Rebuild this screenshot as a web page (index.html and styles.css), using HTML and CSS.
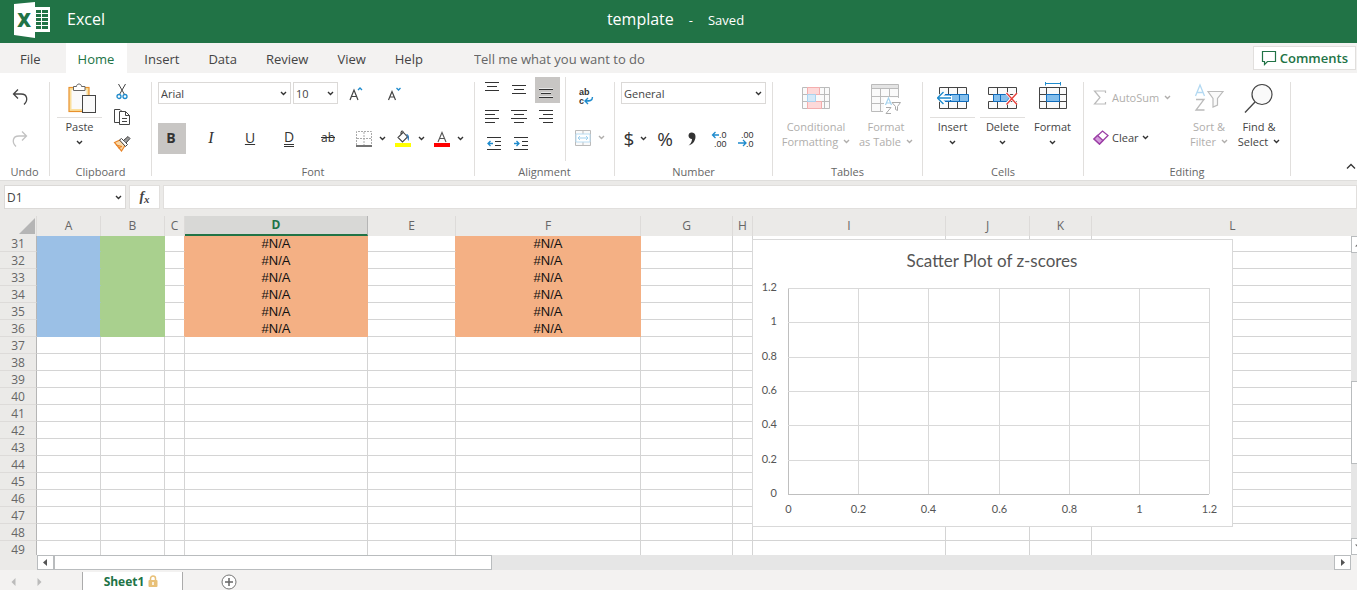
FILE: index.html
```html
<!DOCTYPE html>
<html lang="en">
<head>
    <meta charset="utf-8">
    <title>template - Excel</title>
    <link rel="stylesheet" href="styles.css">
</head>
<body>
    <!-- shared symbols -->
    <svg class="symbols" aria-hidden="true">
        <symbol id="chevron" viewBox="0 0 7 7"><path d="M1 2l2.5 2.5L6 2" fill="none" stroke="currentColor" stroke-width="1.4"/></symbol>
    </svg>

    <header class="topbar">
        <div class="brand">
            <svg width="38" height="38" viewBox="0 0 38 38">
                <path d="M22 6h15v25H22z" fill="#fff"/>
                <path d="M23 9h5v3h-5zM29 9h6v3h-6zM23 13h5v3h-5zM29 13h6v3h-6zM23 17h5v3h-5zM29 17h6v3h-6zM23 21h5v3h-5zM29 21h6v3h-6zM23 25h5v3h-5zM29 25h6v3h-6z" fill="#217346"/>
                <path d="M1 3l21-2v36L1 34z" fill="#fff"/>
                <text x="11" y="26" class="logo-x">X</text>
            </svg>
            <span>Excel</span>
        </div>
        <div class="doc-title"><span>template</span><span class="saved">-</span><span class="saved">Saved</span></div>
    </header>

    <nav class="tabs">
        <button class="tab tab-file">File</button>
        <button class="tab active">Home</button>
        <button class="tab">Insert</button>
        <button class="tab">Data</button>
        <button class="tab">Review</button>
        <button class="tab">View</button>
        <button class="tab">Help</button>
        <input class="tell-me" type="text" placeholder="Tell me what you want to do" aria-label="Tell me what you want to do">
        <button class="comments">
            <svg width="16" height="16" viewBox="0 0 16 16"><path d="M1.500 1.500h13v10H6.500L3.500 14.500v-3h-2z" fill="none" stroke="#217346" stroke-width="1.200"/></svg>
            Comments
        </button>
    </nav>

    <div class="ribbon">
        <section class="group g-undo">
            <div class="tools stack">
                <button class="icon-btn" aria-label="Undo"><svg width="16" height="18" viewBox="0 0 16 18"><path d="M6 1.500L1.500 6 6 10.500M1.500 6H9c7 0 7 7 3 10.500" fill="none" stroke="#444" stroke-width="1.300"/></svg></button>
                <button class="icon-btn" aria-label="Redo" disabled><svg width="16" height="18" viewBox="0 0 16 18"><path d="M10 1.500L14.500 6 10 10.500M14.500 6H7C0 6 0 13 4 16.500" fill="none" stroke="#c2c2c2" stroke-width="1.300"/></svg></button>
            </div>
            <div class="group-label">Undo</div>
        </section>
        <span class="sep"></span>

        <section class="group g-clipboard">
            <div class="tools">
                <button class="big-btn split paste">
                    <svg width="30" height="32" viewBox="0 0 30 32">
                        <rect x="2" y="5.500" width="20" height="24" fill="#fadf9c" stroke="#e8912d" stroke-width="1.200"/>
                        <rect x="4.500" y="8" width="15" height="19" fill="#fafafa"/>
                        <path d="M6.500 8.500v-4H9.500C9.500 1.200 14.500 1.200 14.500 4.500H18v4z" fill="#fff" stroke="#666"/>
                        <rect x="15.500" y="13.500" width="13" height="17" fill="#fafafa" stroke="#444"/>
                    </svg>
                    <span class="txt">Paste</span>
                    <svg class="chev"><use href="#chevron"/></svg>
                </button>
                <div class="stack small-stack">
                    <button class="icon-btn" aria-label="Cut"><svg width="14" height="17" viewBox="0 0 14 17"><path d="M3.500 1l6 10.500M10.500 1l-6 10.500" fill="none" stroke="#444"/><circle cx="4" cy="13.500" r="2" fill="#fff" stroke="#1e8bcd" stroke-width="1.300"/><circle cx="10" cy="13.500" r="2" fill="#fff" stroke="#1e8bcd" stroke-width="1.300"/></svg></button>
                    <button class="icon-btn" aria-label="Copy"><svg width="18" height="18" viewBox="0 0 18 18"><path d="M6 14.500H1.500v-13h5.500l2 2" fill="none" stroke="#444"/><path d="M6.500 3.500h6l4 4v9h-10zM12.500 3.500v4h4M9 10.500h5M9 13.500h5" fill="#fff" stroke="#444"/></svg></button>
                    <button class="icon-btn" aria-label="Format painter"><svg width="18" height="17" viewBox="0 0 18 17"><path d="M1.500 7.500L7 5l5 5.500L8.500 16z" fill="#fbd9a8" stroke="#e8852a" stroke-width="1.200"/><path d="M3 10l6 1.500M5 13l4-1.500" stroke="#e8852a" stroke-width="1.200"/><path d="M6.500 5l2-1.500 6 6-2 2z" fill="#fff" stroke="#444"/><path d="M10.500 5.500L15 1.500l2 2L13 8" fill="#999" stroke="#444"/></svg></button>
                </div>
            </div>
            <div class="group-label">Clipboard</div>
        </section>
        <span class="sep"></span>

        <section class="group g-font">
            <div class="tools two-rows">
                <div class="line">
                    <span class="pick pick-font"><select aria-label="Font"><option>Arial</option></select><svg class="chev"><use href="#chevron"/></svg></span>
                    <span class="pick pick-size"><select aria-label="Font size"><option>10</option></select><svg class="chev"><use href="#chevron"/></svg></span>
                    <button class="icon-btn grow-font" aria-label="Grow font"><svg width="16" height="16" viewBox="0 0 16 16"><path d="M2 15L6 5l4 10M3.300 11.500h5.400" fill="none" stroke="#444" stroke-width="1.200"/><path d="M10 5l2-2 2 2" fill="none" stroke="#1e8bcd" stroke-width="1.300"/></svg></button>
                    <button class="icon-btn shrink-font" aria-label="Shrink font"><svg width="16" height="16" viewBox="0 0 16 16"><path d="M2.500 15L6 6.500 9.500 15M3.700 12h4.600" fill="none" stroke="#444" stroke-width="1.200"/><path d="M10.500 3l2 2 2-2" fill="none" stroke="#1e8bcd" stroke-width="1.300"/></svg></button>
                </div>
                <div class="line">
                    <div class="styles">
                        <button class="style-btn pressed" aria-pressed="true"><b>B</b></button>
                        <button class="style-btn"><i>I</i></button>
                        <button class="style-btn"><u>U</u></button>
                        <button class="style-btn"><span class="double">D</span></button>
                        <button class="style-btn"><s>ab</s></button>
                    </div>
                    <button class="drop-btn" aria-label="Borders">
                        <svg width="16" height="16" viewBox="0 0 16 16"><path d="M.5 14V.5h15V14M8 1v13M1 7.500h14" fill="none" stroke="#aaa" stroke-dasharray="2 1"/><path d="M0 15h16" stroke="#444" stroke-width="1.500"/></svg>
                        <svg class="chev"><use href="#chevron"/></svg>
                    </button>
                    <button class="drop-btn" aria-label="Fill color">
                        <svg width="16" height="17" viewBox="0 0 16 17"><path d="M0 13h16v4H0z" fill="#ff0"/><path d="M8 2.500L3 7.500l4.500 4.500 5-5-4-4.500c-1-3-3-1-2.500 2" fill="#fff" stroke="#444" stroke-width="1.100"/><path d="M11 4c3 0 3.500 3 2.500 7-1-1-1-3-1-5z" fill="#1e70b8"/></svg>
                        <svg class="chev"><use href="#chevron"/></svg>
                    </button>
                    <button class="drop-btn" aria-label="Font color">
                        <svg width="16" height="17" viewBox="0 0 16 17"><path d="M4 12L8 2.500 12 12M5.500 8.500h5" fill="none" stroke="#555" stroke-width="1.100"/><path d="M0 13h16v4H0z" fill="#f00"/></svg>
                        <svg class="chev"><use href="#chevron"/></svg>
                    </button>
                </div>
            </div>
            <div class="group-label">Font</div>
        </section>
        <span class="sep"></span>

        <section class="group g-align">
            <div class="tools">
                <div class="align-grid">
                    <button aria-label="Top align"><svg width="14" height="16" viewBox="0 0 14 16"><path d="M0 .5h14M2 4.500h10M0 8.500h14" stroke="#333"/></svg></button>
                    <button aria-label="Middle align"><svg width="14" height="16" viewBox="0 0 14 16"><path d="M0 3.500h14M2 7.500h10M0 11.500h14" stroke="#333"/></svg></button>
                    <button class="pressed" aria-label="Bottom align"><svg width="14" height="16" viewBox="0 0 14 16"><path d="M0 6.500h14M2 10.500h10M0 14.500h14" stroke="#e6e6e6"/><path d="M0 7.500h14M2 11.500h10M0 15.500h14" stroke="#333"/></svg></button>
                    <button aria-label="Align left"><svg width="14" height="14" viewBox="0 0 14 14"><path d="M0 .5h14M0 4.500h10M0 8.500h14M0 12.500h10" stroke="#333"/></svg></button>
                    <button aria-label="Center"><svg width="16" height="14" viewBox="0 0 16 14"><path d="M0 .5h16M3 4.500h10M0 8.500h16M3 12.500h10" stroke="#333"/></svg></button>
                    <button aria-label="Align right"><svg width="14" height="14" viewBox="0 0 14 14"><path d="M0 .5h14M4 4.500h10M0 8.500h14M4 12.500h10" stroke="#333"/></svg></button>
                    <button class="indent" aria-label="Decrease indent"><svg width="14" height="14" viewBox="0 0 14 14"><path d="M0 .5h14M8 4.500h6M8 8.500h6M0 12.500h14" stroke="#333"/><path d="M6 6.500H1M3.500 4L1 6.500 3.500 9" fill="none" stroke="#1e8bcd" stroke-width="1.300"/></svg></button>
                    <button class="indent" aria-label="Increase indent"><svg width="14" height="14" viewBox="0 0 14 14"><path d="M0 .5h14M8 4.500h6M8 8.500h6M0 12.500h14" stroke="#333"/><path d="M0 6.500h5M2.500 4L5 6.500 2.500 9" fill="none" stroke="#1e8bcd" stroke-width="1.300"/></svg></button>
                </div>
                <span class="inner-sep"></span>
                <div class="stack wrap-stack">
                    <button class="icon-btn" aria-label="Wrap text"><svg width="16" height="22" viewBox="0 0 16 22"><text x="1" y="10" class="mini-bold">ab</text><text x="1" y="19" class="mini-bold">c</text><path d="M14.500 12c0 4-3 4-7 4M10 13l-3 3 3 3" fill="none" stroke="#1e8bcd" stroke-width="1.400"/></svg></button>
                    <button class="drop-btn disabled" aria-label="Merge" disabled>
                        <svg width="16" height="16" viewBox="0 0 16 16"><path d="M.5.500h15v15H.5zM8 1v3M8 12v3" fill="#fafafa" stroke="#bbb"/><path d="M1 4h14v8H1z" fill="#fff" stroke="#b9dcf2"/><path d="M3 8h10M5 6L3 8l2 2M11 6l2 2-2 2" fill="none" stroke="#9fd0ee"/></svg>
                        <svg class="chev"><use href="#chevron"/></svg>
                    </button>
                </div>
            </div>
            <div class="group-label">Alignment</div>
        </section>
        <span class="sep"></span>

        <section class="group g-number">
            <div class="tools two-rows">
                <div class="line"><span class="pick pick-number"><select aria-label="Number format"><option>General</option></select><svg class="chev"><use href="#chevron"/></svg></span></div>
                <div class="line number-line">
                    <button class="drop-btn currency">$ <svg class="chev"><use href="#chevron"/></svg></button>
                    <button class="num-btn">%</button>
                    <button class="num-btn" aria-label="Comma style"><svg width="8" height="14" viewBox="0 0 8 14"><path d="M.5 3.500a3.300 3.300 0 0 1 3.500-3c5 .5 4 7 1 10.500-1 1.300-3 2-4.500 2.500 2-1.500 3.500-3.500 3.500-6.500-2 0-3.500-1.500-3.500-3.500z" fill="#333"/></svg></button>
                    <button class="num-btn" aria-label="Increase decimal"><svg width="16" height="22" viewBox="0 0 16 22"><text x="8" y="10" class="mini">.0</text><text x="3" y="19" class="mini">.00</text><path d="M8 7H1.500M4.500 4l-3 3 3 3" fill="none" stroke="#1e8bcd" stroke-width="1.300"/></svg></button>
                    <button class="num-btn" aria-label="Decrease decimal"><svg width="16" height="22" viewBox="0 0 16 22"><text x="3" y="10" class="mini">.00</text><text x="8" y="19" class="mini">.0</text><path d="M0 15h8M5 12l3 3-3 3" fill="none" stroke="#1e8bcd" stroke-width="1.300"/></svg></button>
                </div>
            </div>
            <div class="group-label">Number</div>
        </section>
        <span class="sep"></span>

        <section class="group g-tables">
            <div class="tools">
                <button class="big-btn disabled" disabled>
                    <svg width="30" height="32" viewBox="0 0 30 32"><path d="M1.500 5.500h27v21h-27zM1.500 12.500h27M1.500 19.500h27M6.500 5v21M23.500 5v21" fill="#fafafa" stroke="#bbb"/><path d="M6.500 5.500h12v7h-12zM6.500 19.500h14v7h-14z" fill="#fdd9d9" stroke="#f4aeae"/><path d="M6.500 12.500h8v7h-8z" fill="#d5e9f8" stroke="#a9d3ef"/></svg>
                    <span class="txt">Conditional</span>
                    <span class="txt">Formatting <svg class="chev"><use href="#chevron"/></svg></span>
                </button>
                <button class="big-btn disabled" disabled>
                    <svg width="30" height="32" viewBox="0 0 30 32"><path d="M.5 2.500h27v27H.5z" fill="#fafafa"/><path d="M.5 2.500h27v4H.5z" fill="#e4e4e4"/><path d="M12 29.500H.5v-27h27V18M.5 6.500h27M.5 14.500h27M.5 21.500H14M9.500 6v23M18.500 6v9" fill="none" stroke="#bbb"/><path d="M13 16h17v16H13z" fill="#fff"/><path d="M14.500 23l3-7 3 7M15.500 21h4" fill="none" stroke="#a4d3ef" stroke-width="1.200"/><path d="M15 25.500h5l-5 6h5" fill="none" stroke="#aaa"/><path d="M21 20.500h8.500l-3 4v4l-2 -1v-3z" fill="#fff" stroke="#aaa"/></svg>
                    <span class="txt">Format</span>
                    <span class="txt">as Table <svg class="chev"><use href="#chevron"/></svg></span>
                </button>
            </div>
            <div class="group-label">Tables</div>
        </section>
        <span class="sep"></span>

        <section class="group g-cells">
            <div class="tools">
                <button class="big-btn split">
                    <svg width="32" height="32" viewBox="0 0 32 32"><path d="M2.500 5.500h27v21h-27zM11.500 5v21M20.500 5v21" fill="#fafafa" stroke="#444"/><path d="M6 12.500h25.500v7H6z" fill="#83beec" stroke="#0f6cbd"/><path d="M13.500 12v8M22.500 12v8" stroke="#0f6cbd"/><path d="M15 16H2M7.500 10L1.500 16l6 6" fill="none" stroke="#fff" stroke-width="4"/><path d="M14 16H1M6.500 10L.5 16l6 6" fill="none" stroke="#1e8bcd" stroke-width="1.400"/></svg>
                    <span class="txt">Insert</span>
                    <svg class="chev"><use href="#chevron"/></svg>
                </button>
                <button class="big-btn split">
                    <svg width="32" height="32" viewBox="0 0 32 32"><path d="M1.500 5.500h28v7h-28zM1.500 19.500h28v7h-28zM10.500 5v7M20.500 5v7M10.500 20v6M20.500 20v6" fill="#fafafa" stroke="#444"/><path d="M0 13h6v6H0zM24 13h8v6h-8z" fill="#fff"/><path d="M6.500 12.500h13l3 3.500-3 3.500h-13z" fill="#83beec" stroke="#0f6cbd"/><path d="M13.500 12v8" stroke="#0f6cbd"/><path d="M19.500 11l10 11M29.500 11l-10 11" stroke="#fff" stroke-width="3"/><path d="M19.500 11l10.500 11.500M30 11L19.500 22.500" stroke="#e8413c" stroke-width="1.400"/></svg>
                    <span class="txt">Delete</span>
                    <svg class="chev"><use href="#chevron"/></svg>
                </button>
                <button class="big-btn">
                    <svg width="32" height="32" viewBox="0 0 32 32"><path d="M2.500 5.500h27v21h-27zM2.500 12.500h27M2.500 19.500h27M9.500 5v21M22.500 5v21" fill="#fafafa" stroke="#444"/><path d="M9.500 12.500h13v7h-13z" fill="#83beec" stroke="#0f6cbd"/><path d="M8.500 0v3.500M23.500 0v3.500M8.500 1.500h15" fill="none" stroke="#1e8bcd"/></svg>
                    <span class="txt">Format</span>
                    <svg class="chev"><use href="#chevron"/></svg>
                </button>
            </div>
            <div class="group-label">Cells</div>
        </section>
        <span class="sep"></span>

        <section class="group g-editing">
            <div class="tools">
                <div class="stack edit-stack">
                    <button class="text-btn autosum disabled" disabled><svg width="14" height="15" viewBox="0 0 14 15"><path d="M12.500 3V1H1.500l5.500 6.500L1.500 14h11v-2" fill="none" stroke="#bbb" stroke-width="1.200"/></svg>AutoSum <svg class="chev"><use href="#chevron"/></svg></button>
                    <button class="text-btn clear"><svg width="16" height="15" viewBox="0 0 16 15"><path d="M1 9l8.500-8L15 5.500 6.500 14z" fill="#fff" stroke="#9b3fa5" stroke-width="1.300"/><path d="M1 9l3.500-3.500 5.500 5L6.500 14z" fill="#d59bdc" stroke="#9b3fa5" stroke-width="1.300"/></svg>Clear <svg class="chev"><use href="#chevron"/></svg></button>
                </div>
                <button class="big-btn disabled" disabled>
                    <svg width="30" height="32" viewBox="0 0 30 32"><path d="M1.500 14L6 3l4.500 11M3 10.500h6" fill="none" stroke="#b3d9f2" stroke-width="1.300"/><path d="M2 17.500h8L2 28h8.500" fill="none" stroke="#bbb" stroke-width="1.300"/><path d="M14 9.500h15l-5.500 7V23L19 25v-8.500z" fill="#fafafa" stroke="#bbb" stroke-width="1.200"/></svg>
                    <span class="txt">Sort &amp;</span>
                    <span class="txt">Filter <svg class="chev"><use href="#chevron"/></svg></span>
                </button>
                <button class="big-btn">
                    <svg width="32" height="32" viewBox="0 0 32 32"><circle cx="19" cy="12.500" r="10" fill="#fafafa" stroke="#444" stroke-width="1.200"/><path d="M12 20L2 30.500" stroke="#444" stroke-width="1.300"/></svg>
                    <span class="txt">Find &amp;</span>
                    <span class="txt">Select <svg class="chev"><use href="#chevron"/></svg></span>
                </button>
            </div>
            <div class="group-label">Editing</div>
        </section>
        <span class="sep"></span>
        <button class="collapse" aria-label="Collapse ribbon"><svg width="10" height="7" viewBox="0 0 10 7"><path d="M1 5.500l4-4 4 4" fill="none" stroke="#333" stroke-width="1.300"/></svg></button>
    </div>

    <div class="formula-bar">
        <span class="pick name-box"><input type="text" value="D1" aria-label="Name box"><svg class="chev"><use href="#chevron"/></svg></span>
        <button class="fx" aria-label="Insert function"><i>f</i><i class="fx-x">x</i></button>
        <input class="formula" type="text" aria-label="Formula">
    </div>

    <main class="sheet">
        <div class="grid-pane">
            <table class="grid">
                <colgroup>
                    <col class="c-head"><col class="c-a"><col class="c-b"><col class="c-c"><col class="c-d"><col class="c-e"><col class="c-f"><col class="c-g"><col class="c-h"><col class="c-i"><col class="c-j"><col class="c-k"><col class="c-l">
                </colgroup>
                <thead>
                    <tr>
                        <th class="corner"><svg width="16" height="16" viewBox="0 0 16 16"><path d="M16 0v16H0z" fill="#b5b5b5"/></svg></th>
                        <th>A</th><th>B</th><th>C</th><th class="selected">D</th><th>E</th><th>F</th><th>G</th><th>H</th><th>I</th><th>J</th><th>K</th><th>L</th>
                    </tr>
                </thead>
                <tbody id="rows"></tbody>
            </table>
            <svg class="chart" width="481" height="288" viewBox="0 0 481 288">
                <rect x=".5" y=".5" width="480" height="287" fill="#fff" stroke="#d9d9d9"/>
                <text x="240" y="28" class="chart-title">Scatter Plot of z-scores</text>
                <g id="plot"></g>
            </svg>
        </div>
        <div class="vscroll">
            <span class="scroll-btn"><svg width="16" height="15" viewBox="0 0 16 15"><path d="M3 9.500l4-4 4 4z" fill="#666"/></svg></span>
            <span class="track-before"></span>
            <span class="thumb"></span>
            <span class="track-after"></span>
            <span class="scroll-btn"><svg width="16" height="15" viewBox="0 0 16 15"><path d="M3 5.500l4 4 4-4z" fill="#666"/></svg></span>
        </div>
    </main>

    <div class="hscroll">
        <span class="scroll-btn"><svg width="15" height="13" viewBox="0 0 15 13"><path d="M9 3v7L5 6.500z" fill="#555"/></svg></span>
        <span class="thumb"></span>
        <span class="track"></span>
        <span class="scroll-btn"><svg width="15" height="13" viewBox="0 0 15 13"><path d="M6 3v7l4-3.500z" fill="#555"/></svg></span>
    </div>

    <footer class="sheet-bar">
        <button class="nav-btn" aria-label="Previous sheet"><svg width="5" height="8" viewBox="0 0 5 8"><path d="M4.500 0v8L.5 4z" fill="#bbb"/></svg></button>
        <button class="nav-btn" aria-label="Next sheet"><svg width="5" height="8" viewBox="0 0 5 8"><path d="M.5 0v8l4-4z" fill="#bbb"/></svg></button>
        <button class="sheet-tab">Sheet1<svg width="10" height="12" viewBox="0 0 10 12"><path d="M2.500 6V3.500a2.500 2.500 0 0 1 5 0V6" fill="none" stroke="#e8c078" stroke-width="1.500"/><rect x=".5" y="5" width="9" height="7" rx="1" fill="#e8c078"/><path d="M5 7v3" stroke="#fff" stroke-width="1.500"/></svg></button>
        <button class="add-sheet" aria-label="New sheet"><svg width="16" height="16" viewBox="0 0 16 16"><circle cx="8" cy="8" r="7" fill="#fff" stroke="#777"/><path d="M8 4v8M4 8h8" stroke="#666" stroke-width="1.500"/></svg></button>
    </footer>

    <script src="script.js"></script>
</body>
</html>
```

FILE: styles.css
```css
* { box-sizing: border-box; }
body { margin: 0; height: 100vh; display: flex; flex-direction: column; overflow: hidden; background: #f3f2f1; color: #444; font-family: "Open Sans", "Noto Sans", sans-serif; font-size: 11px; }
button, input, select { font: inherit; color: inherit; border: 0; padding: 0; margin: 0; background: none; border-radius: 0; }
button { display: flex; align-items: center; justify-content: center; }
svg { display: block; flex: none; }
.symbols { position: absolute; width: 0; height: 0; }
.chev { width: 7px; height: 7px; color: #333; }

/* top bar */
.topbar { flex: none; height: 43px; display: grid; grid-template-columns: 1fr auto 1fr; align-items: center; background: #217346; color: #fff; font-size: 16px; padding: 0 19px 4px 13px; }
.brand { display: flex; align-items: center; gap: 16px; }
.logo-x { font-family: "Open Sans", sans-serif; font-weight: 800; font-size: 19px; fill: #217346; text-anchor: middle; }
.brand span, .doc-title { padding-bottom: 2px; }
.doc-title { display: flex; align-items: center; gap: 15px; }
.saved { font-size: 13px; font-weight: 500; padding-top: 2px; }

/* tabs */
.tabs { flex: none; height: 30px; display: flex; gap: 5px; background: #f3f2f1; font-size: 13px; }
.tab { padding: 2px 12px 0; }
.tab-file { padding-left: 20px; margin-right: 8px; }
.tab.active { background: #fff; color: #217346; padding-right: 13px; }
.tell-me { flex: 1; margin-left: 34px; padding-top: 2px; outline: none; }
.tell-me::placeholder { color: #666; opacity: 1; }
.comments { align-self: center; height: 24px; margin: 0 1px 0 0; padding: 0 7px; gap: 3px; background: #fff; border: 1px solid #e1dfdd; color: #217346; font-weight: 600; }

/* ribbon */
.ribbon { flex: none; height: 108px; display: flex; background: #fff; border-bottom: 1px solid #dfdedc; }
.sep { flex: none; width: 1px; margin: 9px 0 4px; background: #e1dfdd; }
.group { flex: none; display: flex; flex-direction: column; }
.tools { height: 90px; display: flex; }
.group-label { line-height: 17px; text-align: center; color: #666; }
.stack { display: flex; flex-direction: column; }
.icon-btn { width: 24px; height: 26px; }
.pressed { background: #c8c6c4; }
.disabled, .disabled .chev { color: #b0aeac; }
.two-rows { flex-direction: column; padding: 9px 6px 0; gap: 19px; }
.line { display: flex; align-items: center; }

.g-undo { width: 49px; }
.g-undo .tools { align-items: center; padding: 11px 9px 0 0; gap: 16px; }
.g-clipboard { width: 101px; }
.g-clipboard .tools { padding-left: 7px; }
.paste > svg:first-child { margin-left: 4px; }
.small-stack { padding: 5px 0 0 8px; }
.g-font { width: 322px; }
.g-align { width: 139px; }
.g-number { width: 157px; }
.g-tables { width: 149px; }
.g-tables .tools { padding-left: 8px; }
.g-tables .big-btn { width: 70px; }
.g-cells { width: 160px; }
.g-cells .tools { padding-left: 7px; gap: 5px; }
.g-editing { width: 206px; }
.g-editing .big-btn { width: 50px; }

.big-btn { width: 45px; justify-content: flex-start; flex-direction: column; padding-top: 9px; }
.big-btn .txt { display: flex; align-items: center; gap: 5px; line-height: 15px; white-space: nowrap; }
.big-btn .txt:first-of-type { margin-top: 5px; }
.big-btn > .chev { margin-top: 5px; }
.split .txt:first-of-type { width: 45px; justify-content: center; border-top: 1px solid #e1dfdd; margin-top: 3px; padding-top: 1px; }

.pick { display: grid; align-items: center; border: 1px solid #dbd9d7; background: #fff; }
.pick > * { grid-area: 1 / 1; }
.pick select, .pick input { appearance: none; width: 100%; height: 20px; padding: 0 2px; outline: none; }
.pick .chev { justify-self: end; margin-right: 3px; pointer-events: none; }
.pick-font { width: 133px; height: 22px; margin-right: 2px; }
.pick-size { width: 45px; height: 22px; }
.pick-number { width: 145px; height: 22px; }
.grow-font, .shrink-font { height: 22px; margin-left: 6px; }
.shrink-font { margin-left: 14px; }

.styles { display: flex; gap: 11px; margin-right: 10px; }
.style-btn { width: 28px; height: 31px; padding-bottom: 2px; font-size: 14px; color: #333; }
.style-btn.pressed { padding-right: 2px; }
.style-btn i { font-family: "Liberation Serif", serif; font-size: 16px; }
.style-btn s { font-size: 12px; }
.double { border-bottom: 3px double #333; line-height: 15px; }
.drop-btn { width: 39px; height: 31px; gap: 7px; }

.align-grid { display: grid; grid-template-columns: repeat(3, 25px); grid-template-rows: repeat(3, 26px); gap: 1px 2px; padding: 4px 5px 0 6px; }
.align-grid button { padding-right: 3px; }
.align-grid .indent { padding: 0; }
.inner-sep { width: 1px; margin: 4px 0 2px; background: #e1dfdd; }
.wrap-stack { padding: 10px 0 0 4px; gap: 13px; }
.wrap-stack .icon-btn { margin-left: 4px; }
.mini { font-family: "Liberation Sans", sans-serif; font-size: 9px; fill: #333; }
.mini-bold { font-family: "Liberation Sans", sans-serif; font-size: 9px; font-weight: 700; fill: #333; }
.number-line { gap: 3px; color: #333; font-size: 19px; }
.currency { width: 29px; gap: 6px; }
.num-btn { width: 24px; height: 31px; }

.edit-stack { width: 100px; padding: 12px 0 0 9px; gap: 16px; }
.text-btn { height: 24px; justify-content: flex-start; gap: 3px; }
.autosum { gap: 5px; }
.collapse { margin: 0 1px 7px auto; align-self: flex-end; width: 10px; height: 14px; }

/* formula bar */
.formula-bar { flex: none; height: 35px; display: flex; align-items: flex-start; gap: 3px; padding: 4px 0 0 4px; background: #ebeae8; font-size: 12px; }
.name-box { width: 122px; height: 24px; }
.fx { width: 31px; height: 24px; background: #fff; border: 1px solid #e1dfdd; font-family: "Liberation Serif", serif; font-weight: bold; font-size: 14px; }
.fx-x { font-size: 11px; padding-top: 4px; }
.formula { flex: 1; height: 24px; background: #fff; border: 1px solid #e1dfdd; outline: none; }

/* sheet */
.sheet { flex: 1; min-height: 0; display: flex; background: #ebeae8; }
.grid-pane { flex: 1; min-width: 0; position: relative; overflow: hidden; }
.grid { table-layout: fixed; width: 1374px; border-spacing: 0; background: #fff; }
.c-head { width: 37px; }
.c-a, .c-b { width: 64px; }
.c-c, .c-h { width: 20px; }
.c-d { width: 183px; }
.c-e { width: 88px; }
.c-f { width: 185px; }
.c-g { width: 92px; }
.c-i { width: 193px; }
.c-j { width: 84px; }
.c-k { width: 62px; }
.c-l { width: 282px; }
.grid th { padding: 0; font-weight: 400; font-size: 12px; color: #666; background: #ebeae8; }
.grid thead th { height: 20px; line-height: 18px; padding-bottom: 1px; border-right: 1px solid #dddbd9; }
.grid .corner { padding: 0 2px 0 19px; }
.grid thead .selected { background: #d8d8d6; padding: 0; border-bottom: 2px solid #217346; color: #217346; font-weight: 700; border-right-color: #b5b5b5; }
.grid tbody th { height: 17px; line-height: 15px; padding-top: 1px; border-right: 1px solid #b5b5b5; border-bottom: 1px solid #dddbd9; }
.grid td { padding: 1px 0 0; line-height: 15px; border-right: 1px solid #d4d4d4; border-bottom: 1px solid #d4d4d4; font-family: "Liberation Sans", Arial, sans-serif; font-size: 13px; color: #111; text-align: center; }
.grid tbody tr:first-child > * { height: 16px; line-height: 15px; padding: 0; }
.grid .blue { background: #9bc0e6; border-color: #9bc0e6; border-right-color: #a9d08e; }
.grid .green { background: #a9d08e; border-color: #a9d08e; }
.grid .orange { background: #f4b084; border-color: #f4b084; }
.grid .before-orange { border-right-color: #f4b084; }

/* floating chart object */
.chart { position: absolute; left: 752px; top: 23px; }
.chart text { font-family: Lato, "Open Sans", sans-serif; font-size: 11px; fill: #555; }
.chart .chart-title { font-size: 17px; text-anchor: middle; }
.chart .x-label { text-anchor: middle; }
.chart .y-label { text-anchor: end; }

/* scrollbars */
.scroll-btn, .thumb { display: block; flex: none; background: #fff; border: 1px solid #b9bcbe; }
.vscroll { flex: none; width: 6px; margin-top: 20px; display: flex; flex-direction: column; overflow: hidden; background: #e6e6e6; }
.vscroll .scroll-btn, .vscroll .thumb { width: 17px; }
.vscroll .scroll-btn { height: 17px; }
.vscroll .thumb { flex: 81; }
.track-before { flex: 129; }
.track-after { flex: 75; }
.hscroll { flex: none; height: 15px; display: flex; padding: 0 6px 0 37px; background: linear-gradient(90deg, #ebeae8 37px, #e6e6e6 37px, #e6e6e6 calc(100% - 6px), #f3f2f1 calc(100% - 6px)); }
.hscroll .scroll-btn { width: 17px; }
.hscroll .thumb { flex: 437; }
.hscroll .track { flex: 843; }

/* sheet tabs */
.sheet-bar { flex: none; height: 20px; display: flex; background: #f3f2f1; }
.nav-btn { width: 26px; height: 24px; }
.sheet-tab { width: 101px; margin-left: 30px; margin-top: 2px; gap: 4px; background: #fff; border: solid #ababab; border-width: 0 1px; color: #217346; font-size: 12px; font-weight: 700; padding-right: 3px; }
.add-sheet { width: 30px; height: 24px; margin-left: 31px; }
```

FILE: script.js
```js
// rows 31-49, the first six hold the formula columns
const rows = document.getElementById('rows');
const filled = { 0: 'blue', 1: 'green', 2: 'before-orange', 3: 'orange', 4: 'before-orange', 5: 'orange' };

let html = '';
for (let r = 31; r <= 49; r++) {
    html += `<tr><th>${r}</th>`;
    for (let c = 0; c < 12; c++) {
        const cls = r <= 36 ? (filled[c] || '') : '';
        html += `<td class="${cls}">${cls === 'orange' ? '#N/A' : ''}</td>`;
    }
    html += '</tr>';
}
rows.innerHTML = html;

// empty scatter plot axes
const left = 36, right = 457, top_ = 49, bottom = 255;
const ticks = ['0', '0.2', '0.4', '0.6', '0.8', '1', '1.2'];
let plot = '';
ticks.forEach((t, i) => {
    const x = Math.round(left + (right - left) * i / 6) + 0.5;
    const y = Math.round(bottom - (bottom - top_) * i / 6) + 0.5;
    const color = i === 0 ? '#bfbfbf' : '#d9d9d9';
    plot += `<path d="M${x} ${top_}V${bottom}M${left} ${y}H${right}" stroke="${color}"/>`;
    plot += `<text class="x-label" x="${x}" y="274">${t}</text>`;
    plot += `<text class="y-label" x="25" y="${y + 2}">${t}</text>`;
});
document.getElementById('plot').innerHTML = plot;
```
